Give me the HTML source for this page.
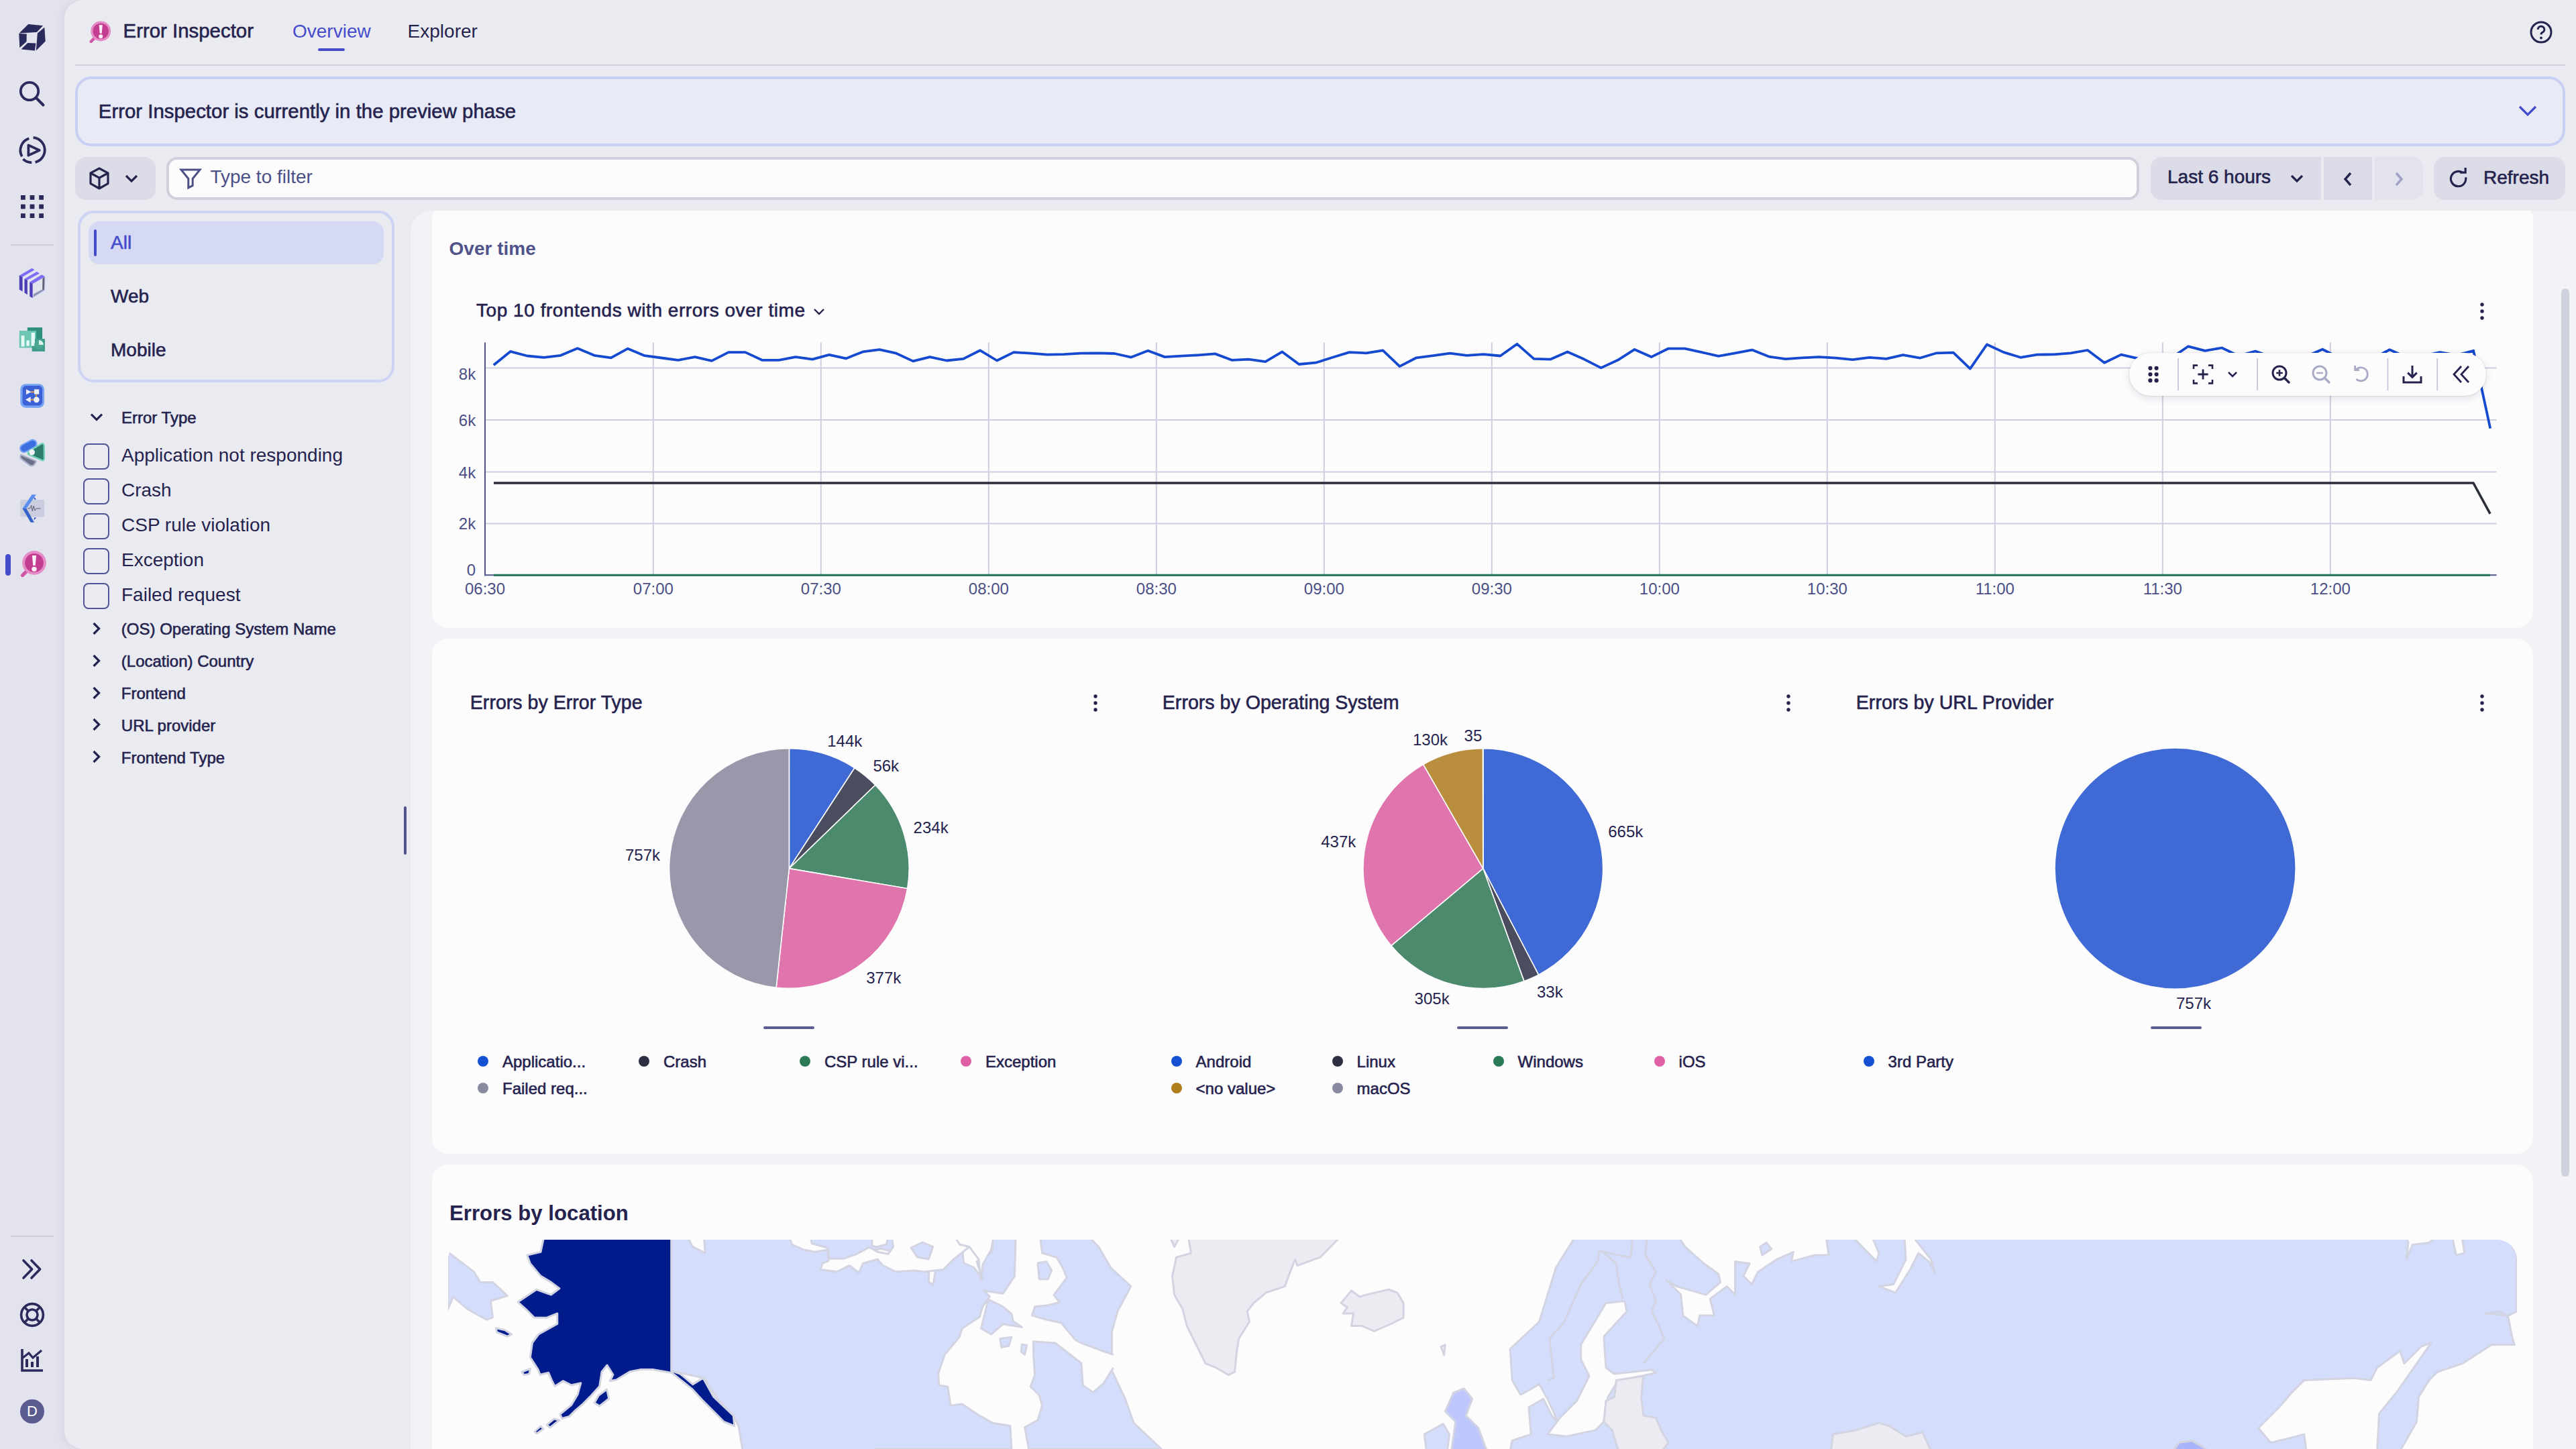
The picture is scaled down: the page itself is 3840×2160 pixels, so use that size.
<!DOCTYPE html>
<html><head><meta charset="utf-8">
<style>
html,body{margin:0;padding:0;width:100%;height:100%;min-width:3840px;min-height:2160px;overflow:hidden;background:#e3e3ee}
#root{zoom:2;position:relative;width:1920px;height:1080px;overflow:hidden;background:#e3e3ee;font-family:"Liberation Sans",sans-serif;color:#25234e}
.a{position:absolute}
.t{position:absolute;white-space:nowrap;line-height:1;font-size:14px}
.s12{font-size:12px}
.med{-webkit-text-stroke:0.3px currentColor}
svg{overflow:visible}
</style></head>
<body><div id="root">

<!-- ============ NAV ============ -->
<div class="a" style="left:0;top:0;width:48px;height:1080px;background:#e3e3ee"></div>
<!-- search -->
<svg class="a" style="left:13px;top:59px" width="22" height="22" viewBox="0 0 22 22">
  <circle cx="9" cy="9" r="6.6" fill="none" stroke="#2a2a5c" stroke-width="1.9"/>
  <path d="M14 14 L19.2 19.2" stroke="#2a2a5c" stroke-width="2.1" stroke-linecap="round"/>
</svg>
<!-- play -->
<svg class="a" style="left:13px;top:101px" width="22" height="22" viewBox="0 0 22 22">
  <path d="M11.8 1.6 A9.3 9.3 0 0 1 13.3 19.9" fill="none" stroke="#2a2a5c" stroke-width="1.9"/>
  <path d="M10.6 20.2 A9.3 9.3 0 0 1 4.2 17.6" fill="none" stroke="#2a2a5c" stroke-width="1.9"/>
  <path d="M3.4 15.6 A9.3 9.3 0 0 1 8.6 2.2" fill="none" stroke="#2a2a5c" stroke-width="1.9"/>
  <path d="M8.2 7.2 L16.4 11 L8.2 14.8 Z" fill="none" stroke="#2a2a5c" stroke-width="1.9" stroke-linejoin="round"/>
</svg>
<!-- grid -->
<svg class="a" style="left:15px;top:145px" width="18" height="18" viewBox="0 0 18 18">
  <g fill="#2a2a5c">
  <rect x="0.5" y="0.5" width="3.4" height="3.4"/><rect x="7.3" y="0.5" width="3.4" height="3.4"/><rect x="14.1" y="0.5" width="3.4" height="3.4"/>
  <rect x="0.5" y="7.3" width="3.4" height="3.4"/><rect x="7.3" y="7.3" width="3.4" height="3.4"/><rect x="14.1" y="7.3" width="3.4" height="3.4"/>
  <rect x="0.5" y="14.1" width="3.4" height="3.4"/><rect x="7.3" y="14.1" width="3.4" height="3.4"/><rect x="14.1" y="14.1" width="3.4" height="3.4"/>
  </g>
</svg>
<div class="a" style="left:8px;top:182px;width:32px;height:1px;background:#cfcfdd"></div>
<!-- app icons -->
<svg class="a" style="left:0;top:0" width="48" height="48" viewBox="0 0 48 48">
<path d="M21.1,18.05 L32.07,19.13 L27.4,23.97 L14.3,24.7 Z" fill="#2b2a5c"/>
<path d="M14.13,25.05 L19.87,25.23 L19.78,30.97 L14.66,35.64 Z" fill="#2b2a5c"/>
<path d="M20.59,32.05 L26.69,32.23 L25.97,37.8 L15.74,36.7 Z" fill="#2b2a5c"/>
<path d="M33.15,20.38 L33.87,30.8 L26.87,37.8 L27.95,24.69 Z" fill="#2b2a5c"/>
</svg>
<svg class="a" style="left:11.0px;top:196.0px" width="26.0" height="70.0" viewBox="0 0 538 1449">
<path d="M70,195 L265,80 L305,105 L120,215 Z" fill="#7d6cf6"/>
<path d="M70,195 L120,215 L120,440 L70,410 Z" fill="#4a3db5"/>
<path d="M150,245 L340,135 L385,160 L195,265 Z" fill="#7d6cf6"/>
<path d="M150,245 L195,265 L195,490 L150,460 Z" fill="#4a3db5"/>
<path d="M275,320 L465,210 L460,420 L275,530 Z" fill="none" stroke="#c9cdf5" stroke-width="14"/>
<path d="M430,235 L460,215 L455,420 L425,405 Z" fill="#5e6273"/>
<path d="M290,480 L425,405 L455,420 L285,525 Z" fill="#8c95b3"/>
<path d="M230,295 L415,180 L465,210 L275,320 Z" fill="#7d6cf6"/>
<path d="M230,295 L275,320 L275,540 L230,515 Z" fill="#4a3db5"/>
<rect x="195" y="995" width="230" height="175" fill="#2f8f7f"/>
<rect x="70" y="1045" width="260" height="265" fill="#6cc6b3"/>
<rect x="265" y="1170" width="200" height="195" fill="#3f9c8a"/>
<rect x="100" y="1120" width="50" height="170" fill="#e6faf5"/>
<rect x="180" y="1195" width="45" height="85" fill="#e6faf5"/>
<rect x="255" y="1075" width="55" height="205" fill="#e6faf5"/>
<circle cx="372" cy="1262" r="72" fill="#4aa593"/>
<path d="M372,1262 L372,1190 A72,72 0 0 1 444,1262 Z" fill="#d8f3ec"/>
</svg>
<svg class="a" style="left:11.0px;top:281.0px" width="26.0" height="70.0" viewBox="0 0 538 1449">
<rect x="85" y="105" width="370" height="370" rx="85" fill="#78a3f2"/>
<rect x="120" y="135" width="305" height="305" rx="55" fill="#3c60d6"/>
<path d="M250,230 H300 M330,265 V305 M245,350 H290" stroke="#e6a13e" stroke-width="20"/>
<path d="M175,190 L255,230 L175,272 Z" fill="#eef0fb"/>
<rect x="300" y="190" width="75" height="75" fill="#eef0fb"/>
<path d="M165,350 L245,305 L245,395 Z" fill="#eef0fb"/>
<circle cx="335" cy="350" r="45" fill="#eef0fb"/>
<rect x="75" y="1005" width="270" height="120" rx="60" transform="rotate(-28 210 1065)" fill="#3d6ee0" stroke="#75a3f5" stroke-width="22"/>
<path d="M95,1200 Q75,1240 110,1270 L230,1360 Q270,1385 300,1350 L330,1300 Z" fill="#6c7189" stroke="#a8aec8" stroke-width="22" stroke-linejoin="round"/>
<path d="M215,1150 L410,1030 Q450,1015 452,1060 L455,1260 Q450,1300 410,1280 L220,1200 Q190,1180 215,1150 Z" fill="#2e7c6b" stroke="#72d2ba" stroke-width="24" stroke-linejoin="round"/>
<circle cx="265" cy="1160" r="45" fill="#f2f3fa"/>
</svg>
<svg class="a" style="left:11.0px;top:365.0px" width="26.0" height="70.0" viewBox="0 0 538 1449">
<rect x="85" y="155" width="370" height="265" rx="14" fill="#c9cddd"/>
<path d="M265,75 L330,75 L180,290 L120,290 Z" fill="#5a8ff0"/>
<path d="M120,290 L180,290 L300,505 L245,505 Z" fill="#3462c8"/>
<path d="M295,110 L335,150 L300,150 Z M300,430 L335,430 L295,470 Z" fill="#2f55b8"/>
<path d="M200,290 L235,290 L255,240 L272,330 L292,250 L312,322 L332,290 L400,290" fill="none" stroke="#4a4d5e" stroke-width="9"/>

<path d="M120,1320 L195,1245" stroke="#d254a4" stroke-width="55" stroke-linecap="round"/>
<circle cx="300" cy="1128" r="185" fill="#e58cc8"/>
<circle cx="300" cy="1128" r="150" fill="#c33d90"/>
<circle cx="300" cy="1128" r="150" fill="none" stroke="#f3b6dc" stroke-width="6"/>
<path d="M268,1015 L332,1015 L318,1170 L282,1170 Z" fill="#fdf0f8"/>
<circle cx="300" cy="1225" r="38" fill="#fdf0f8"/>
</svg>

<div class="a" style="left:4px;top:413px;width:4px;height:16px;border-radius:2px;background:#454ccb"></div>
<!-- bottom nav -->
<div class="a" style="left:8px;top:921px;width:32px;height:1px;background:#cfcfdd"></div>
<svg class="a" style="left:14px;top:936px" width="20" height="20" viewBox="0 0 20 20">
  <path d="M3.5 3.5 L9.8 10 L3.5 16.5 M9.5 3.5 L15.8 10 L9.5 16.5" fill="none" stroke="#2a2a5c" stroke-width="1.8" stroke-linecap="round" stroke-linejoin="round"/>
</svg>
<svg class="a" style="left:14px;top:970px" width="20" height="20" viewBox="0 0 20 20">
  <circle cx="10" cy="10" r="8.2" fill="none" stroke="#2a2a5c" stroke-width="1.8"/>
  <circle cx="10" cy="10" r="4" fill="none" stroke="#2a2a5c" stroke-width="1.8"/>
  <path d="M4.2 4.2 L7.2 7.2 M15.8 4.2 L12.8 7.2 M4.2 15.8 L7.2 12.8 M15.8 15.8 L12.8 12.8" stroke="#2a2a5c" stroke-width="1.8"/>
</svg>
<svg class="a" style="left:14px;top:1004px" width="20" height="20" viewBox="0 0 20 20">
  <path d="M2.5 1.5 L2.5 17.5 L18 17.5" fill="none" stroke="#2a2a5c" stroke-width="1.8"/>
  <path d="M6 15 V9 M10 15 V11 M14 15 V7" stroke="#2a2a5c" stroke-width="2"/>
  <path d="M3 8 L7.5 4.5 L10.5 8 L17 2.5" fill="none" stroke="#2a2a5c" stroke-width="1.6"/>
</svg>
<div class="a" style="left:15px;top:1043px;width:18px;height:18px;border-radius:50%;background:#5b5b8f;color:#fff;font-size:11px;line-height:18px;text-align:center">D</div>

<!-- ============ MAIN ============ -->
<div class="a" style="left:48px;top:0;width:1872px;height:1080px;background:#eaebf1;border-radius:14px 0 0 14px;box-shadow:-1px 0 0 #dcdce8,-3px 0 5px rgba(60,60,110,0.05)"></div>

<!-- header -->
<svg class="a" style="left:66.2px;top:14.9px" width="16.8" height="17.4" viewBox="75 925 415 430">
<path d="M120,1320 L195,1245" stroke="#d254a4" stroke-width="55" stroke-linecap="round"/>
<circle cx="300" cy="1128" r="185" fill="#e58cc8"/>
<circle cx="300" cy="1128" r="150" fill="#c33d90"/>
<circle cx="300" cy="1128" r="150" fill="none" stroke="#f3b6dc" stroke-width="6"/>
<path d="M268,1015 L332,1015 L318,1170 L282,1170 Z" fill="#fdf0f8"/>
<circle cx="300" cy="1225" r="38" fill="#fdf0f8"/>
</svg>

<div class="t med" style="left:91.8px;top:15.4px;font-size:14.7px">Error Inspector</div>
<div class="t" style="left:218px;top:16.3px;color:#454ccb">Overview</div>
<div class="a" style="left:237px;top:36px;width:20px;height:2px;border-radius:1px;background:#454ccb"></div>
<div class="t" style="left:303.8px;top:16.3px">Explorer</div>
<svg class="a" style="left:1885px;top:15px" width="18" height="18" viewBox="0 0 18 18">
  <circle cx="9" cy="9" r="7.5" fill="none" stroke="#25234e" stroke-width="1.5"/>
  <path d="M6.6 7 A2.4 2.4 0 1 1 9.9 9.2 C9.2 9.5 9 9.9 9 10.8" fill="none" stroke="#25234e" stroke-width="1.5"/>
  <circle cx="9" cy="13.2" r="1" fill="#25234e"/>
</svg>
<div class="a" style="left:56px;top:48px;width:1856px;height:1px;background:#d2d2de"></div>

<!-- banner -->
<div class="a" style="left:56px;top:57px;width:1856px;height:52px;box-sizing:border-box;border:2px solid #c9cff4;border-radius:12px;background:#e8eaf6"></div>
<div class="t med" style="left:73.4px;top:75.6px;font-size:14.7px">Error Inspector is currently in the preview phase</div>
<svg class="a" style="left:1877px;top:78px" width="14" height="10" viewBox="0 0 14 10">
  <path d="M1 1.5 L7 7.5 L13 1.5" fill="none" stroke="#454ccb" stroke-width="1.6"/>
</svg>

<!-- filter row -->
<div class="a" style="left:56px;top:117px;width:60px;height:32px;border-radius:8px;background:#dcdce8"></div>
<svg class="a" style="left:65px;top:124px" width="18" height="18" viewBox="0 0 18 18">
  <path d="M9 1.5 L15.5 5 L15.5 12.8 L9 16.5 L2.5 12.8 L2.5 5 Z M2.5 5 L9 8.6 L15.5 5 M9 8.6 L9 16.5" fill="none" stroke="#25234e" stroke-width="1.6" stroke-linejoin="round"/>
</svg>
<svg class="a" style="left:93px;top:130px" width="10" height="7" viewBox="0 0 10 7">
  <path d="M1 1 L5 5 L9 1" fill="none" stroke="#25234e" stroke-width="1.6"/>
</svg>
<div class="a" style="left:124px;top:117px;width:1470.5px;height:32px;box-sizing:border-box;border:2px solid #d0d0dd;border-radius:8px;background:#fcfcfd"></div>
<svg class="a" style="left:134px;top:125px" width="16" height="16" viewBox="0 0 16 16">
  <path d="M1 1.5 L15 1.5 L9.6 8.2 L9.6 13.3 L6.4 15 L6.4 8.2 Z" fill="none" stroke="#4b4f86" stroke-width="1.5" stroke-linejoin="miter"/>
</svg>
<div class="t" style="left:156.7px;top:125px;color:#4b4f86">Type to filter</div>

<div class="a" style="left:1603px;top:117px;width:127px;height:32px;border-radius:8px 0 0 8px;background:#dcdce8"></div>
<div class="t med" style="left:1615.5px;top:125px">Last 6 hours</div>
<svg class="a" style="left:1707px;top:130px" width="10" height="7" viewBox="0 0 10 7">
  <path d="M1 1 L5 5 L9 1" fill="none" stroke="#25234e" stroke-width="1.6"/>
</svg>
<div class="a" style="left:1732px;top:117px;width:36px;height:32px;background:#dcdce8"></div>
<svg class="a" style="left:1746px;top:128px" width="8" height="11" viewBox="0 0 8 11">
  <path d="M6 1 L2 5.5 L6 10" fill="none" stroke="#25234e" stroke-width="1.7"/>
</svg>
<div class="a" style="left:1770px;top:117px;width:36px;height:32px;border-radius:0 8px 8px 0;background:#e3e3ee"></div>
<svg class="a" style="left:1784px;top:128px" width="8" height="11" viewBox="0 0 8 11">
  <path d="M2 1 L6 5.5 L2 10" fill="none" stroke="#9fa1c6" stroke-width="1.7"/>
</svg>
<div class="a" style="left:1814px;top:117px;width:98px;height:32px;border-radius:8px;background:#dcdce8"></div>
<svg class="a" style="left:1825px;top:126px" width="15" height="15" viewBox="0 0 15 15">
  <path d="M12.8 6.2 A5.6 5.6 0 1 1 10.4 2.6" fill="none" stroke="#25234e" stroke-width="1.6"/>
  <path d="M8.6 2.6 L12.6 2.6 L12.6 -1" fill="none" stroke="#25234e" stroke-width="1.6"/>
</svg>
<div class="t med" style="left:1851px;top:125.5px">Refresh</div>

<!-- ============ SIDEBAR ============ -->
<div class="a" style="left:58px;top:157px;width:236px;height:128px;box-sizing:border-box;border:2px solid #cdd3f3;border-radius:12px"></div>
<div class="a" style="left:66px;top:165px;width:220px;height:32px;border-radius:8px;background:#d5d9f4"></div>
<div class="a" style="left:70px;top:171px;width:2px;height:20px;border-radius:1px;background:#454ccb"></div>
<div class="t med" style="left:82.5px;top:173.8px;color:#454ccb">All</div>
<div class="t med" style="left:82.5px;top:213.8px">Web</div>
<div class="t med" style="left:82.5px;top:253.8px">Mobile</div>

<svg class="a" style="left:67px;top:308px" width="10" height="6" viewBox="0 0 10 6"><path d="M1 0.8 L5 4.8 L9 0.8" fill="none" stroke="#25234e" stroke-width="1.6"/></svg>
<div class="t med" style="left:90.5px;top:305.64px;font-size:12px;">Error Type</div>
<div class="a" style="left:62px;top:330.3px;width:19.5px;height:19.5px;box-sizing:border-box;border:1.2px solid #4f5496;border-radius:4px"></div>
<div class="t " style="left:90.5px;top:332.65px;">Application not responding</div>
<div class="a" style="left:62px;top:356.3px;width:19.5px;height:19.5px;box-sizing:border-box;border:1.2px solid #4f5496;border-radius:4px"></div>
<div class="t " style="left:90.5px;top:358.65px;">Crash</div>
<div class="a" style="left:62px;top:382.3px;width:19.5px;height:19.5px;box-sizing:border-box;border:1.2px solid #4f5496;border-radius:4px"></div>
<div class="t " style="left:90.5px;top:384.65px;">CSP rule violation</div>
<div class="a" style="left:62px;top:408.3px;width:19.5px;height:19.5px;box-sizing:border-box;border:1.2px solid #4f5496;border-radius:4px"></div>
<div class="t " style="left:90.5px;top:410.65px;">Exception</div>
<div class="a" style="left:62px;top:434.3px;width:19.5px;height:19.5px;box-sizing:border-box;border:1.2px solid #4f5496;border-radius:4px"></div>
<div class="t " style="left:90.5px;top:436.65px;">Failed request</div>
<svg class="a" style="left:69px;top:463.4px" width="6" height="10" viewBox="0 0 6 10"><path d="M0.8 1 L4.8 5 L0.8 9" fill="none" stroke="#25234e" stroke-width="1.6"/></svg>
<div class="t med" style="left:90.4px;top:463.04px;font-size:12px;">(OS) Operating System Name</div>
<svg class="a" style="left:69px;top:487.3px" width="6" height="10" viewBox="0 0 6 10"><path d="M0.8 1 L4.8 5 L0.8 9" fill="none" stroke="#25234e" stroke-width="1.6"/></svg>
<div class="t med" style="left:90.4px;top:486.99px;font-size:12px;">(Location) Country</div>
<svg class="a" style="left:69px;top:511.3px" width="6" height="10" viewBox="0 0 6 10"><path d="M0.8 1 L4.8 5 L0.8 9" fill="none" stroke="#25234e" stroke-width="1.6"/></svg>
<div class="t med" style="left:90.4px;top:510.94px;font-size:12px;">Frontend</div>
<svg class="a" style="left:69px;top:535.2px" width="6" height="10" viewBox="0 0 6 10"><path d="M0.8 1 L4.8 5 L0.8 9" fill="none" stroke="#25234e" stroke-width="1.6"/></svg>
<div class="t med" style="left:90.4px;top:534.89px;font-size:12px;">URL provider</div>
<svg class="a" style="left:69px;top:559.2px" width="6" height="10" viewBox="0 0 6 10"><path d="M0.8 1 L4.8 5 L0.8 9" fill="none" stroke="#25234e" stroke-width="1.6"/></svg>
<div class="t med" style="left:90.4px;top:558.84px;font-size:12px;">Frontend Type</div>

<div class="a" style="left:301px;top:601px;width:2px;height:36px;background:#52528a;border-radius:1px"></div>

<!-- ============ CONTENT ============ -->
<div class="a" id="content" style="left:306px;top:157px;width:1614px;height:923px;background:#f2f2f7;border-radius:16px 0 0 0;overflow:hidden">
  <div class="a" style="left:16px;top:-5.5px;width:1566px;height:316.4px;border-radius:12px;background:#fcfcfd"></div>
  <div class="a" style="left:16px;top:319px;width:1566px;height:384px;border-radius:12px;background:#fcfcfd"></div>
  <div class="a" style="left:16px;top:711px;width:1566px;height:400px;border-radius:12px;background:#fcfcfd"></div>
  <div class="a" style="left:1603px;top:58px;width:6px;height:662px;border-radius:3px;background:#d0d1de"></div>
</div>

<div class="t " style="left:334.8px;top:178.65px;color:#4f5389;font-weight:700;">Over time</div>
<div class="t med" style="left:355.0px;top:224.65px;letter-spacing:0.27px;">Top 10 frontends with errors over time</div>
<svg class="a" style="left:606px;top:229.5px" width="9" height="6" viewBox="0 0 9 6"><path d="M1 1 L4.5 4.5 L8 1" fill="none" stroke="#25234e" stroke-width="1.2"/></svg>
<svg class="a" style="left:1847.0px;top:224.0px" width="6" height="16" viewBox="0 0 6 16"><circle cx="3" cy="3" r="1.35" fill="#25234e"/><circle cx="3" cy="8" r="1.35" fill="#25234e"/><circle cx="3" cy="13" r="1.35" fill="#25234e"/></svg>
<svg class="a" style="left:0;top:0" width="1920" height="1080" viewBox="0 0 1920 1080"><line x1="361.5" y1="274.3" x2="1860.8" y2="274.3" stroke="#cdcedf" stroke-width="1"/><line x1="361.5" y1="313.0" x2="1860.8" y2="313.0" stroke="#cdcedf" stroke-width="1"/><line x1="361.5" y1="351.7" x2="1860.8" y2="351.7" stroke="#cdcedf" stroke-width="1"/><line x1="361.5" y1="390.3" x2="1860.8" y2="390.3" stroke="#cdcedf" stroke-width="1"/><line x1="486.9" y1="255.2" x2="486.9" y2="428.6" stroke="#cdcedf" stroke-width="1"/><line x1="611.9" y1="255.2" x2="611.9" y2="428.6" stroke="#cdcedf" stroke-width="1"/><line x1="736.9" y1="255.2" x2="736.9" y2="428.6" stroke="#cdcedf" stroke-width="1"/><line x1="861.9" y1="255.2" x2="861.9" y2="428.6" stroke="#cdcedf" stroke-width="1"/><line x1="986.9" y1="255.2" x2="986.9" y2="428.6" stroke="#cdcedf" stroke-width="1"/><line x1="1111.9" y1="255.2" x2="1111.9" y2="428.6" stroke="#cdcedf" stroke-width="1"/><line x1="1236.9" y1="255.2" x2="1236.9" y2="428.6" stroke="#cdcedf" stroke-width="1"/><line x1="1361.9" y1="255.2" x2="1361.9" y2="428.6" stroke="#cdcedf" stroke-width="1"/><line x1="1486.9" y1="255.2" x2="1486.9" y2="428.6" stroke="#cdcedf" stroke-width="1"/><line x1="1611.9" y1="255.2" x2="1611.9" y2="428.6" stroke="#cdcedf" stroke-width="1"/><line x1="1736.9" y1="255.2" x2="1736.9" y2="428.6" stroke="#cdcedf" stroke-width="1"/><line x1="361.5" y1="255.2" x2="361.5" y2="429.1" stroke="#4f5389" stroke-width="1"/><line x1="361" y1="428.6" x2="1860.8" y2="428.6" stroke="#4f5389" stroke-width="1"/><polyline points="368,428.7 1856,428.7" fill="none" stroke="#2f7a5c" stroke-width="1.6"/><polyline points="368,360 1843.5,360 1856,382.9" fill="none" stroke="#2b2e3b" stroke-width="1.8" stroke-linejoin="round"/><polyline points="367.90,272.10 380.41,261.95 392.91,265.25 405.42,266.40 417.92,264.90 430.43,259.65 442.94,264.90 455.44,266.65 467.95,259.85 480.45,265.10 492.96,266.75 505.47,268.40 517.97,266.05 530.48,268.95 542.98,262.55 555.49,262.55 568.00,268.40 580.50,268.40 593.01,266.05 605.51,267.80 618.02,264.40 630.53,267.20 643.03,262.20 655.54,260.55 668.04,263.35 680.55,269.20 693.06,266.05 705.56,268.75 718.07,267.45 730.57,261.15 743.08,268.75 755.59,262.55 768.09,263.35 780.60,264.30 793.10,264.05 805.61,263.35 818.12,263.15 830.62,263.50 843.13,266.30 855.63,261.40 868.14,266.05 880.65,265.35 893.15,264.65 905.66,263.70 918.16,268.40 930.67,267.80 943.18,269.55 955.68,262.20 968.19,271.50 980.69,270.35 993.20,266.40 1005.71,262.55 1018.21,263.15 1030.72,261.15 1043.22,273.05 1055.73,266.65 1068.24,265.10 1080.74,263.35 1093.25,264.90 1105.75,264.05 1118.26,265.25 1130.77,256.40 1143.27,267.45 1155.78,267.80 1168.28,262.20 1180.79,267.80 1193.30,274.20 1205.80,268.40 1218.31,260.45 1230.81,266.05 1243.32,259.85 1255.83,259.85 1268.33,262.55 1280.84,265.45 1293.34,263.15 1305.85,260.80 1318.36,265.80 1330.86,267.55 1343.37,266.65 1355.87,266.05 1368.38,266.85 1380.89,268.05 1393.39,266.40 1405.90,267.45 1418.40,264.55 1430.91,266.85 1443.42,263.15 1455.92,262.80 1468.43,274.80 1480.93,256.75 1493.44,262.55 1505.95,266.40 1518.45,264.30 1530.96,264.20 1543.46,263.20 1555.97,261.00 1568.48,270.40 1580.98,264.30 1593.49,267.20 1605.99,265.70 1618.50,266.70 1631.01,258.15 1643.51,261.40 1656.02,259.25 1668.52,265.20 1681.03,261.75 1693.54,266.20 1706.04,267.20 1718.55,265.70 1731.05,260.35 1743.56,266.70 1756.07,265.70 1768.57,267.20 1781.08,260.65 1793.58,266.20 1806.09,265.20 1818.60,262.50 1831.10,264.70 1843.61,261.40 1856.11,319.35" fill="none" stroke="#1449d0" stroke-width="1.9" stroke-linejoin="round"/></svg>
<div class="t" style="right:1565.4px;top:273.24px;font-size:12px;color:#4b4f86">8k</div>
<div class="t" style="right:1565.4px;top:307.74px;font-size:12px;color:#4b4f86">6k</div>
<div class="t" style="right:1565.4px;top:346.44px;font-size:12px;color:#4b4f86">4k</div>
<div class="t" style="right:1565.4px;top:384.64px;font-size:12px;color:#4b4f86">2k</div>
<div class="t" style="right:1565.4px;top:419.24px;font-size:12px;color:#4b4f86">0</div>
<div class="t" style="left:346.5px;width:30px;text-align:center;top:433.04px;font-size:12px;color:#4b4f86">06:30</div>
<div class="t" style="left:471.9px;width:30px;text-align:center;top:433.04px;font-size:12px;color:#4b4f86">07:00</div>
<div class="t" style="left:596.9px;width:30px;text-align:center;top:433.04px;font-size:12px;color:#4b4f86">07:30</div>
<div class="t" style="left:721.9px;width:30px;text-align:center;top:433.04px;font-size:12px;color:#4b4f86">08:00</div>
<div class="t" style="left:846.9px;width:30px;text-align:center;top:433.04px;font-size:12px;color:#4b4f86">08:30</div>
<div class="t" style="left:971.9px;width:30px;text-align:center;top:433.04px;font-size:12px;color:#4b4f86">09:00</div>
<div class="t" style="left:1096.9px;width:30px;text-align:center;top:433.04px;font-size:12px;color:#4b4f86">09:30</div>
<div class="t" style="left:1221.9px;width:30px;text-align:center;top:433.04px;font-size:12px;color:#4b4f86">10:00</div>
<div class="t" style="left:1346.9px;width:30px;text-align:center;top:433.04px;font-size:12px;color:#4b4f86">10:30</div>
<div class="t" style="left:1471.9px;width:30px;text-align:center;top:433.04px;font-size:12px;color:#4b4f86">11:00</div>
<div class="t" style="left:1596.9px;width:30px;text-align:center;top:433.04px;font-size:12px;color:#4b4f86">11:30</div>
<div class="t" style="left:1721.9px;width:30px;text-align:center;top:433.04px;font-size:12px;color:#4b4f86">12:00</div>
<div class="a" style="left:1587px;top:263px;width:266px;height:32px;border-radius:16px;background:#fcfcfd;box-shadow:0 2px 6px rgba(40,40,80,0.13),0 0 1px rgba(40,40,80,0.2)"></div>
<svg class="a" style="left:1587px;top:263px" width="266" height="32" viewBox="0 0 266 32"><line x1="36.5" y1="4" x2="36.5" y2="28" stroke="#c9cadb" stroke-width="1"/><line x1="95.5" y1="4" x2="95.5" y2="28" stroke="#c9cadb" stroke-width="1"/><line x1="192.7" y1="4" x2="192.7" y2="28" stroke="#c9cadb" stroke-width="1"/><line x1="229.6" y1="4" x2="229.6" y2="28" stroke="#c9cadb" stroke-width="1"/><circle cx="15.7" cy="11.4" r="1.55" fill="#25234e"/><circle cx="15.7" cy="16" r="1.55" fill="#25234e"/><circle cx="15.7" cy="20.6" r="1.55" fill="#25234e"/><circle cx="20.3" cy="11.4" r="1.55" fill="#25234e"/><circle cx="20.3" cy="16" r="1.55" fill="#25234e"/><circle cx="20.3" cy="20.6" r="1.55" fill="#25234e"/><path d="M48 12 V9.3 H51 M59 9.3 H62 V12 M62 20 V22.7 H59 M51 22.7 H48 V20" fill="none" stroke="#25234e" stroke-width="1.3"/><path d="M55 12.2 V19.8 M51.2 16 H58.8" stroke="#25234e" stroke-width="1.4"/><path d="M74 14.5 L77 17.5 L80 14.5" fill="none" stroke="#25234e" stroke-width="1.3"/><circle cx="112" cy="15" r="5" fill="none" stroke="#25234e" stroke-width="1.5"/><path d="M115.6 18.6 L119 22" stroke="#25234e" stroke-width="1.7" stroke-linecap="round"/><path d="M112 12.6 V17.4 M109.6 15 H114.4" stroke="#25234e" stroke-width="1.3"/><circle cx="142" cy="15" r="5" fill="none" stroke="#a9abc6" stroke-width="1.5"/><path d="M145.6 18.6 L149 22" stroke="#a9abc6" stroke-width="1.7" stroke-linecap="round"/><path d="M139.6 15 H144.4" stroke="#a9abc6" stroke-width="1.3"/><path d="M169 12.5 A5 5 0 1 1 169.2 19.5" fill="none" stroke="#a9abc6" stroke-width="1.4"/><path d="M168.3 9.5 V12.8 H171.5" fill="none" stroke="#a9abc6" stroke-width="1.4"/><path d="M211 9.5 V18 M207.6 14.8 L211 18.2 L214.4 14.8" fill="none" stroke="#25234e" stroke-width="1.5"/><path d="M204.5 17.5 V22 H217.5 V17.5" fill="none" stroke="#25234e" stroke-width="1.5"/><path d="M247.5 10 L242 16 L247.5 22 M253 10 L247.5 16 L253 22" fill="none" stroke="#25234e" stroke-width="1.4"/></svg>
<svg class="a" style="left:0;top:0" width="1920" height="1080" viewBox="0 0 1920 1080"><path d="M588.2,647.3 L588.20,557.90 A89.4,89.4 0 0 1 636.97,572.37 Z" fill="#3f69d4" stroke="#fcfcfd" stroke-width="0.8" stroke-linejoin="round"/><path d="M588.2,647.3 L636.97,572.37 A89.4,89.4 0 0 1 652.42,585.11 Z" fill="#4a4d5e" stroke="#fcfcfd" stroke-width="0.8" stroke-linejoin="round"/><path d="M588.2,647.3 L652.42,585.11 A89.4,89.4 0 0 1 676.34,662.28 Z" fill="#4b8a6d" stroke="#fcfcfd" stroke-width="0.8" stroke-linejoin="round"/><path d="M588.2,647.3 L676.34,662.28 A89.4,89.4 0 0 1 578.55,736.18 Z" fill="#e074ac" stroke="#fcfcfd" stroke-width="0.8" stroke-linejoin="round"/><path d="M588.2,647.3 L578.55,736.18 A89.4,89.4 0 0 1 588.20,557.90 Z" fill="#9898aa" stroke="#fcfcfd" stroke-width="0.8" stroke-linejoin="round"/><path d="M1105.4,647.3 L1105.40,557.90 A89.4,89.4 0 0 1 1146.74,726.57 Z" fill="#3f69d4" stroke="#fcfcfd" stroke-width="0.8" stroke-linejoin="round"/><path d="M1105.4,647.3 L1146.74,726.57 A89.4,89.4 0 0 1 1135.95,731.32 Z" fill="#4a4d5e" stroke="#fcfcfd" stroke-width="0.8" stroke-linejoin="round"/><path d="M1105.4,647.3 L1135.95,731.32 A89.4,89.4 0 0 1 1036.97,704.83 Z" fill="#4b8a6d" stroke="#fcfcfd" stroke-width="0.8" stroke-linejoin="round"/><path d="M1105.4,647.3 L1036.97,704.83 A89.4,89.4 0 0 1 1060.87,569.78 Z" fill="#e074ac" stroke="#fcfcfd" stroke-width="0.8" stroke-linejoin="round"/><path d="M1105.4,647.3 L1060.87,569.78 A89.4,89.4 0 0 1 1105.29,557.90 Z" fill="#b98e3c" stroke="#fcfcfd" stroke-width="0.8" stroke-linejoin="round"/><path d="M1105.4,647.3 L1105.29,557.90 A89.4,89.4 0 0 1 1105.40,557.90 Z" fill="#9898aa" stroke="#fcfcfd" stroke-width="0.8" stroke-linejoin="round"/><circle cx="1621.3" cy="647.3" r="89.4" fill="#3f69d4"/><line x1="570" y1="766" x2="606" y2="766" stroke="#5b5b8f" stroke-width="2" stroke-linecap="round"/><line x1="1087" y1="766" x2="1123" y2="766" stroke="#5b5b8f" stroke-width="2" stroke-linecap="round"/><line x1="1604" y1="766" x2="1640" y2="766" stroke="#5b5b8f" stroke-width="2" stroke-linecap="round"/></svg>
<div class="t med" style="left:350.4px;top:516.40px;font-size:14.3px;">Errors by Error Type</div>
<div class="t med" style="left:866.4px;top:516.40px;font-size:14.3px;">Errors by Operating System</div>
<div class="t med" style="left:1383.4px;top:516.40px;font-size:14.3px;">Errors by URL Provider</div>
<svg class="a" style="left:813.5px;top:516.0px" width="6" height="16" viewBox="0 0 6 16"><circle cx="3" cy="3" r="1.35" fill="#25234e"/><circle cx="3" cy="8" r="1.35" fill="#25234e"/><circle cx="3" cy="13" r="1.35" fill="#25234e"/></svg>
<svg class="a" style="left:1330.0px;top:516.0px" width="6" height="16" viewBox="0 0 6 16"><circle cx="3" cy="3" r="1.35" fill="#25234e"/><circle cx="3" cy="8" r="1.35" fill="#25234e"/><circle cx="3" cy="13" r="1.35" fill="#25234e"/></svg>
<svg class="a" style="left:1847.0px;top:516.0px" width="6" height="16" viewBox="0 0 6 16"><circle cx="3" cy="3" r="1.35" fill="#25234e"/><circle cx="3" cy="8" r="1.35" fill="#25234e"/><circle cx="3" cy="13" r="1.35" fill="#25234e"/></svg>
<div class="t " style="left:616.6px;top:546.34px;font-size:12px;">144k</div>
<div class="t " style="left:650.7px;top:564.84px;font-size:12px;">56k</div>
<div class="t " style="left:680.8px;top:610.84px;font-size:12px;">234k</div>
<div class="t " style="left:645.6px;top:723.14px;font-size:12px;">377k</div>
<div class="t " style="left:466.0px;top:631.74px;font-size:12px;">757k</div>
<div class="t " style="left:1053.0px;top:545.74px;font-size:12px;">130k</div>
<div class="t " style="left:1091.3px;top:542.34px;font-size:12px;">35</div>
<div class="t " style="left:1198.6px;top:614.14px;font-size:12px;">665k</div>
<div class="t " style="left:984.6px;top:621.74px;font-size:12px;">437k</div>
<div class="t " style="left:1054.3px;top:738.34px;font-size:12px;">305k</div>
<div class="t " style="left:1145.5px;top:733.34px;font-size:12px;">33k</div>
<div class="t " style="left:1622.0px;top:741.84px;font-size:12px;">757k</div>
<div class="a" style="left:356.0px;top:787.0px;width:8px;height:8px;border-radius:50%;background:#1450d2"></div>
<div class="t med" style="left:374.5px;top:785.54px;font-size:12px;">Applicatio...</div>
<div class="a" style="left:476.0px;top:787.0px;width:8px;height:8px;border-radius:50%;background:#2b2f40"></div>
<div class="t med" style="left:494.5px;top:785.54px;font-size:12px;">Crash</div>
<div class="a" style="left:596.0px;top:787.0px;width:8px;height:8px;border-radius:50%;background:#2a7a57"></div>
<div class="t med" style="left:614.5px;top:785.54px;font-size:12px;">CSP rule vi...</div>
<div class="a" style="left:716.0px;top:787.0px;width:8px;height:8px;border-radius:50%;background:#e060a6"></div>
<div class="t med" style="left:734.5px;top:785.54px;font-size:12px;">Exception</div>
<div class="a" style="left:356.0px;top:807.0px;width:8px;height:8px;border-radius:50%;background:#888aa0"></div>
<div class="t med" style="left:374.5px;top:805.54px;font-size:12px;">Failed req...</div>
<div class="a" style="left:872.8px;top:787.0px;width:8px;height:8px;border-radius:50%;background:#1450d2"></div>
<div class="t med" style="left:891.3px;top:785.54px;font-size:12px;">Android</div>
<div class="a" style="left:992.8px;top:787.0px;width:8px;height:8px;border-radius:50%;background:#2b2f40"></div>
<div class="t med" style="left:1011.3px;top:785.54px;font-size:12px;">Linux</div>
<div class="a" style="left:1112.8px;top:787.0px;width:8px;height:8px;border-radius:50%;background:#2a7a57"></div>
<div class="t med" style="left:1131.3px;top:785.54px;font-size:12px;">Windows</div>
<div class="a" style="left:1232.8px;top:787.0px;width:8px;height:8px;border-radius:50%;background:#e060a6"></div>
<div class="t med" style="left:1251.3px;top:785.54px;font-size:12px;">iOS</div>
<div class="a" style="left:872.8px;top:807.0px;width:8px;height:8px;border-radius:50%;background:#ae7d1c"></div>
<div class="t med" style="left:891.3px;top:805.54px;font-size:12px;">&lt;no value&gt;</div>
<div class="a" style="left:992.8px;top:807.0px;width:8px;height:8px;border-radius:50%;background:#888aa0"></div>
<div class="t med" style="left:1011.3px;top:805.54px;font-size:12px;">macOS</div>
<div class="a" style="left:1388.8px;top:787.0px;width:8px;height:8px;border-radius:50%;background:#1450d2"></div>
<div class="t med" style="left:1407.3px;top:785.54px;font-size:12px;">3rd Party</div>
<div class="t " style="left:335.0px;top:896.29px;font-size:15.6px;font-weight:700;">Errors by location</div>
<svg class="a" style="left:334px;top:924px" width="1542" height="156" viewBox="668 1848 3084 312"><defs><clipPath id="mc"><rect x="668" y="1848" width="3084" height="600" rx="30"/></clipPath></defs><g clip-path="url(#mc)"><polygon points="1000.7,1830.0 1460.0,1830.0 1460.0,2163.0 1107.2,2163.0 1101.0,2125.7 1093.2,2110.2 1069.9,2085.3 1049.8,2054.3 1014.0,2046.5 1000.7,2043.4" fill="#d5ddfc" stroke="#d3d4e2" stroke-width="3" stroke-linejoin="round"/><polygon points="1300.0,1830.0 1609.9,1830.0 1638.0,1859.0 1655.4,1889.3 1685.7,1917.5 1666.2,1954.3 1657.5,1984.7 1657.5,2015.0 1655.4,2038.8 1677.0,2084.4 1690.0,2121.2 1731.2,2160.0 1300.0,2160.0" fill="#d5ddfc" stroke="#d3d4e2" stroke-width="3" stroke-linejoin="round"/><polygon points="1297.0,1830.0 1304.0,1830.0 1304.0,2165.0 1297.0,2165.0" fill="#d5ddfc"/><polygon points="1514.5,1830.0 1549.2,1830.0 1553.5,1867.7 1575.2,1874.2 1583.9,1889.3 1590.4,1904.5 1570.9,1930.5 1579.5,1941.3 1562.2,1945.7 1542.7,1947.8 1538.4,1960.8 1560.0,1967.3 1581.7,1971.7 1603.4,1997.7 1612.0,2002.0 1646.7,2015.0 1659.7,2019.3 1659.7,2038.8 1644.5,2062.7 1629.4,2075.7 1614.2,2064.9 1612.0,2032.3 1573.0,2002.0 1540.5,1999.8 1540.5,2019.3 1542.7,2049.7 1536.2,2067.0 1549.2,2080.0 1553.5,2095.2 1547.0,2116.9 1527.5,2127.7 1534.0,2162.4 1508.0,2162.4 1505.9,2125.5 1479.8,2121.2 1460.3,2110.4 1434.3,2093.0 1417.0,2095.2 1412.7,2067.0 1399.7,2064.9 1398.6,2047.5 1408.3,2019.3 1430.0,1993.3 1434.3,1980.3 1460.3,1963.0 1464.7,1947.8 1475.5,1932.7 1466.8,1924.0 1495.0,1928.3 1512.4,1902.3" fill="#fcfcfd"/><polyline points="1659.7,2038.8 1644.5,2062.7 1629.4,2075.7 1614.2,2064.9 1612.0,2032.3 1573.0,2002.0 1540.5,1999.8 1540.5,2019.3 1542.7,2049.7 1536.2,2067.0 1549.2,2080.0 1553.5,2095.2 1547.0,2116.9 1527.5,2127.7 1534.0,2162.4 1508.0,2162.4 1505.9,2125.5 1479.8,2121.2 1460.3,2110.4 1434.3,2093.0 1417.0,2095.2 1412.7,2067.0 1399.7,2064.9 1398.6,2047.5 1408.3,2019.3 1430.0,1993.3 1434.3,1980.3 1460.3,1963.0 1464.7,1947.8 1475.5,1932.7 1466.8,1924.0 1495.0,1928.3 1512.4,1902.3 1514.5,1830.0 1549.2,1830.0 1553.5,1867.7 1575.2,1874.2 1583.9,1889.3 1590.4,1904.5 1570.9,1930.5 1579.5,1941.3 1562.2,1945.7 1542.7,1947.8 1538.4,1960.8 1560.0,1967.3 1581.7,1971.7 1603.4,1997.7 1612.0,2002.0 1646.7,2015.0 1659.7,2019.3" fill="none" stroke="#d3d4e2" stroke-width="3" stroke-linejoin="round"/><polygon points="1462.5,1980.3 1477.7,1989.0 1495.0,1973.8 1523.2,1978.2 1510.2,1969.5 1508.0,1958.7 1495.0,1947.8 1473.3,1937.0" fill="#d5ddfc" stroke="#d3d4e2" stroke-width="3" stroke-linejoin="round"/><polygon points="1490.7,1995.5 1508.0,1993.3 1503.7,2006.3 1492.8,2008.5" fill="#d5ddfc" stroke="#d3d4e2" stroke-width="3" stroke-linejoin="round"/><polygon points="1523.2,2004.2 1530.8,2005.3 1527.5,2019.3 1522.1,2015.0" fill="#d5ddfc" stroke="#d3d4e2" stroke-width="3" stroke-linejoin="round"/><polygon points="1547.0,1882.8 1560.0,1880.7 1567.6,1893.7 1562.2,1906.7 1549.2,1906.7" fill="#d5ddfc" stroke="#d3d4e2" stroke-width="3" stroke-linejoin="round"/><polygon points="1300.0,1864.4 1313.0,1872.0 1326.0,1889.3 1343.3,1894.8 1365.0,1889.3 1375.8,1895.8 1384.5,1887.2 1384.5,1911.0 1391.0,1915.3 1395.3,1889.3 1408.3,1869.8 1401.8,1854.7 1393.2,1830.0 1373.7,1859.0 1356.3,1863.3 1345.5,1869.8 1330.3,1865.5 1313.0,1861.2" fill="#fcfcfd" stroke="#d3d4e2" stroke-width="3" stroke-linejoin="round"/><polygon points="1430.0,1830.0 1479.8,1830.0 1479.8,1865.5 1456.0,1880.7 1464.7,1906.7 1451.7,1889.3 1436.5,1882.8 1434.3,1859.0" fill="#fcfcfd" stroke="#d3d4e2" stroke-width="3" stroke-linejoin="round"/><polygon points="1300.0,1830.0 1326.0,1830.0 1321.7,1854.7 1306.5,1859.0 1300.0,1856.8" fill="#fcfcfd" stroke="#d3d4e2" stroke-width="3" stroke-linejoin="round"/><polygon points="1170.1,1830.0 1204.2,1830.0 1210.4,1853.8 1233.7,1860.0 1236.8,1876.3 1257.0,1876.3 1277.2,1869.3 1295.8,1859.2 1308.3,1866.2 1323.8,1869.3 1331.6,1858.4 1326.9,1830.0 1413.9,1830.0 1437.1,1855.3 1443.4,1860.0 1421.6,1877.1 1406.1,1892.6 1378.1,1895.7 1362.6,1894.1 1334.7,1895.7 1316.0,1886.4 1308.3,1877.1 1286.5,1883.3 1280.3,1897.2 1266.3,1886.4 1247.7,1895.7 1222.9,1892.6 1226.0,1883.3 1235.3,1879.4 1233.7,1863.1 1215.1,1866.2 1198.0,1863.1 1180.9,1855.3" fill="#fcfcfd" stroke="#d3d4e2" stroke-width="3" stroke-linejoin="round"/><polygon points="1358.0,1860.0 1375.0,1852.2 1390.6,1858.4 1384.3,1877.1 1367.3,1874.0" fill="#d5ddfc" stroke="#d3d4e2" stroke-width="3" stroke-linejoin="round"/><polygon points="1430.9,1855.3 1444.9,1858.4 1458.9,1877.1 1462.0,1908.1 1465.1,1884.8 1477.5,1863.1 1483.7,1830.0 1413.9,1830.0" fill="#fcfcfd" stroke="#d3d4e2" stroke-width="3" stroke-linejoin="round"/><polygon points="1017.1,1830.0 1048.2,1830.0 1051.3,1868.0 1032.7,1858.6" fill="#fcfcfd" stroke="#d3d4e2" stroke-width="3" stroke-linejoin="round"/><polygon points="813.7,1830.0 1000.7,1830.0 1000.7,2043.4 1014.0,2048.0 1032.7,2063.6 1048.2,2054.3 1063.7,2082.2 1093.2,2110.2 1094.8,2125.7 1079.3,2119.5 1048.2,2088.4 1032.7,2071.4 1001.6,2046.5 972.9,2041.6 954.3,2041.6 938.8,2044.7 918.6,2057.0 909.3,2058.6 913.9,2049.3 905.0,2035.0 897.0,2045.0 893.7,2066.4 879.8,2081.9 868.9,2092.8 858.0,2102.1 848.7,2111.4 837.8,2114.5 834.7,2108.3 851.8,2094.3 861.1,2078.8 865.8,2061.7 851.8,2064.8 839.4,2058.6 827.0,2066.4 822.3,2057.1 817.6,2046.2 805.2,2049.3 802.1,2041.6 790.4,2023.2 793.5,2001.5 802.9,1989.0 830.8,1973.5 830.8,1958.0 815.3,1964.2 796.6,1964.2 784.2,1951.8 771.8,1940.9 799.8,1922.3 821.5,1930.1 833.9,1920.7 821.5,1911.4 806.0,1902.1 790.4,1883.5 785.8,1871.1 806.0,1866.4 813.7,1830.0" fill="#001b8b" stroke="#d3d4e2" stroke-width="3" stroke-linejoin="round"/><polygon points="904.6,2071.0 907.7,2085.0 893.7,2095.9 886.0,2091.2 892.2,2080.4" fill="#001b8b" stroke="#d3d4e2" stroke-width="3" stroke-linejoin="round"/><polygon points="797.0,2134.0 806.0,2126.0 810.0,2130.0 800.0,2137.0" fill="#001b8b" stroke="#d3d4e2" stroke-width="3" stroke-linejoin="round"/><polygon points="815.0,2124.0 826.0,2115.0 834.0,2117.0 820.0,2128.0" fill="#001b8b" stroke="#d3d4e2" stroke-width="3" stroke-linejoin="round"/><polygon points="739.2,1979.8 753.2,1982.9 762.5,1989.1 756.3,1992.2 740.7,1986.0" fill="#001b8b" stroke="#d3d4e2" stroke-width="3" stroke-linejoin="round"/><polygon points="778.0,2045.0 790.4,2040.3 788.9,2048.1 781.1,2049.6" fill="#001b8b" stroke="#d3d4e2" stroke-width="3" stroke-linejoin="round"/><polygon points="667.8,1866.4 706.6,1895.9 715.9,1911.4 734.5,1911.4 756.3,1931.6 731.4,1939.4 734.5,1964.2 725.2,1967.3 697.3,1951.8 675.5,1933.2 667.8,1951.8" fill="#d5ddfc" stroke="#d3d4e2" stroke-width="3" stroke-linejoin="round"/><polygon points="1769.2,1830.0 2011.4,1830.0 1968.0,1874.2 1933.8,1886.6 1930.7,1877.3 1924.5,1892.8 1915.2,1917.6 1887.2,1927.0 1868.6,1942.5 1859.3,1954.9 1862.4,1970.4 1846.8,1995.3 1843.7,2013.9 1840.6,2045.0 1831.3,2049.6 1812.7,2038.8 1797.1,2032.5 1781.6,2001.5 1769.2,1976.6 1763.0,1951.8 1750.6,1930.1 1747.5,1902.1 1753.7,1874.2 1775.4,1868.0" fill="#ebebf1" stroke="#d3d4e2" stroke-width="3" stroke-linejoin="round"/><polygon points="1738.1,1830.0 1766.1,1830.0 1750.6,1858.6" fill="#ebebf1" stroke="#d3d4e2" stroke-width="3" stroke-linejoin="round"/><polygon points="1999.0,1942.5 2014.5,1923.9 2027.0,1933.2 2036.3,1930.1 2070.4,1922.3 2082.9,1927.0 2092.2,1942.5 2092.2,1964.2 2073.5,1973.5 2048.7,1984.4 2030.1,1976.6 2014.5,1976.6 2017.6,1958.0 2002.1,1958.0 2008.3,1948.7" fill="#ebebf1" stroke="#d3d4e2" stroke-width="3" stroke-linejoin="round"/><polygon points="2166.7,2076.0 2182.2,2069.8 2194.7,2085.3 2185.3,2110.2 2204.0,2128.8 2216.4,2163.0 2163.6,2163.0 2169.8,2119.5 2154.3,2104.0" fill="#bfc8fd" stroke="#d3d4e2" stroke-width="3" stroke-linejoin="round"/><polygon points="2123.2,2138.1 2151.2,2122.6 2160.5,2138.1 2157.4,2163.0 2126.3,2163.0" fill="#d5ddfc" stroke="#d3d4e2" stroke-width="3" stroke-linejoin="round"/><polygon points="2148.1,2007.7 2154.3,2004.6 2152.7,2020.1" fill="#ebebf1" stroke="#d3d4e2" stroke-width="3" stroke-linejoin="round"/><polygon points="2356.6,1830.0 2493.3,1830.0 2511.9,1858.6 2539.9,1883.5 2561.6,1899.0 2564.7,1911.4 2543.0,1930.1 2499.5,1917.6 2484.0,1908.3 2505.7,1930.1 2508.8,1961.1 2530.6,1976.6 2533.7,1961.1 2555.4,1961.1 2549.2,1936.3 2574.0,1917.6 2586.5,1930.1 2586.5,1880.4 2608.2,1883.5 2598.9,1902.1 2611.3,1914.5 2620.6,1895.9 2648.6,1877.3 2673.4,1866.4 2670.3,1880.4 2704.5,1871.1 2726.2,1871.1 2720.0,1830.0 2748.0,1830.0 2797.6,1880.4 2800.7,1868.0 2785.2,1830.0 2838.0,1830.0 2841.1,1877.3 2822.5,1914.5 2800.7,1917.6 2825.6,1927.0 2847.3,1892.8 2859.8,1868.0 2875.3,1880.4 2884.6,1897.5 2878.4,1877.3 2866.0,1861.7 2841.1,1830.0 3020.0,1830.0 3020.0,2163.0 2251.1,2163.0 2254.2,2147.5 2282.1,2138.1 2279.0,2097.8 2300.7,2085.3 2313.2,2110.2 2322.5,2119.5 2307.0,2085.3 2294.5,2063.6 2266.6,2079.1 2254.2,2057.4 2251.1,2010.8 2294.5,1970.4 2319.4,1889.7" fill="#d5ddfc" stroke="#d3d4e2" stroke-width="3" stroke-linejoin="round"/><polygon points="2623.7,1858.6 2633.0,1852.4 2640.8,1861.7 2626.8,1871.1" fill="#d5ddfc" stroke="#d3d4e2" stroke-width="3" stroke-linejoin="round"/><polygon points="2356.6,2004.6 2393.9,1942.5 2421.9,1939.4 2425.0,1954.9 2390.8,1992.2 2393.9,2038.8 2406.3,2048.1 2462.2,2041.9 2468.4,2046.5 2446.7,2051.2 2412.5,2057.4 2397.0,2082.2 2390.8,2119.5 2378.4,2131.9 2334.9,2141.2 2307.0,2138.1 2325.6,2113.3 2350.4,2088.4 2369.1,2051.2 2356.6,2026.3" fill="#fcfcfd" stroke="#d3d4e2" stroke-width="3" stroke-linejoin="round"/><polygon points="2409.4,2057.4 2449.8,2051.2 2446.7,2082.2 2449.8,2110.2 2468.4,2113.3 2477.8,2135.0 2487.1,2150.6 2477.8,2163.0 2412.5,2163.0 2403.2,2131.9 2390.8,2119.5 2393.9,2088.4 2406.3,2082.2" fill="#ebebf1" stroke="#d3d4e2" stroke-width="3" stroke-linejoin="round"/><polygon points="2732.4,2138.1 2766.6,2131.9 2800.7,2121.1 2816.3,2125.7 2841.1,2141.2 2866.0,2135.0 2878.4,2163.0 2729.3,2163.0" fill="#ebebf1" stroke="#d3d4e2" stroke-width="3" stroke-linejoin="round"/><polygon points="3000.0,1830.0 3580.7,1830.0 3590.1,1852.4 3587.0,1877.3 3596.3,1855.5 3621.1,1852.4 3649.1,1830.0 3723.6,1830.0 3745.3,1858.6 3751.6,1868.0 3751.6,1954.9 3739.1,1961.1 3705.0,1958.0 3726.7,1954.9 3739.1,1964.2 3745.3,1995.3 3748.4,2004.6 3714.3,2004.6 3670.8,2032.5 3633.5,2045.0 3621.1,2057.4 3605.6,2082.2 3602.5,2119.5 3577.6,2163.0 3543.5,2163.0 3546.6,2107.1 3574.5,2072.9 3624.2,2001.5 3608.7,2007.7 3583.9,2032.5 3577.6,2013.9 3543.5,2038.8 3534.2,2057.4 3509.3,2054.3 3434.8,2057.4 3416.1,2076.0 3397.5,2097.8 3366.5,2128.8 3385.1,2150.6 3434.8,2138.1 3437.9,2163.0 3000.0,2163.0" fill="#d5ddfc" stroke="#d3d4e2" stroke-width="3" stroke-linejoin="round"/><polygon points="2997.0,1830.0 3004.0,1830.0 3004.0,2165.0 2997.0,2165.0" fill="#d5ddfc"/><polygon points="3652.2,1830.0 3667.7,1830.0 3673.9,1868.0 3661.5,1871.1" fill="#fcfcfd" stroke="#d3d4e2" stroke-width="3" stroke-linejoin="round"/><polygon points="3239.1,2163.0 3248.4,2150.6 3267.1,2147.5 3288.8,2159.9 3291.9,2163.0" fill="#a9b5fb" stroke="#d3d4e2" stroke-width="3" stroke-linejoin="round"/><polyline points="2434.3,1830.0 2431.2,1874.2 2412.5,1871.1 2384.6,1864.8 2381.5,1880.4 2356.6,1914.5 2331.8,1970.4 2310.1,1995.3 2313.2,2026.3 2316.3,2054.3 2307.0,2057.4" fill="none" stroke="#d3d4e2" stroke-width="3" stroke-linejoin="round"/><polyline points="2387.7,1864.8 2409.4,1883.5 2412.5,1908.3 2418.8,1936.3" fill="none" stroke="#d3d4e2" stroke-width="3" stroke-linejoin="round"/><polyline points="2456.0,1830.0 2452.9,1871.1 2468.4,1895.9 2459.1,1914.5 2468.4,1939.4 2462.2,1954.9 2471.6,1973.5 2480.9,1995.3 2449.8,2032.5" fill="none" stroke="#d3d4e2" stroke-width="3" stroke-linejoin="round"/></g></svg>


</div>
<script>
(function(){var w=window.innerWidth||3840;if(w>0&&w<3000){var z=w/1920;document.getElementById('root').style.zoom=z;document.documentElement.style.minWidth=w+'px';document.documentElement.style.minHeight=(1080*z)+'px';document.body.style.minWidth=w+'px';document.body.style.minHeight=(1080*z)+'px';}})();
</script>
</body></html>
